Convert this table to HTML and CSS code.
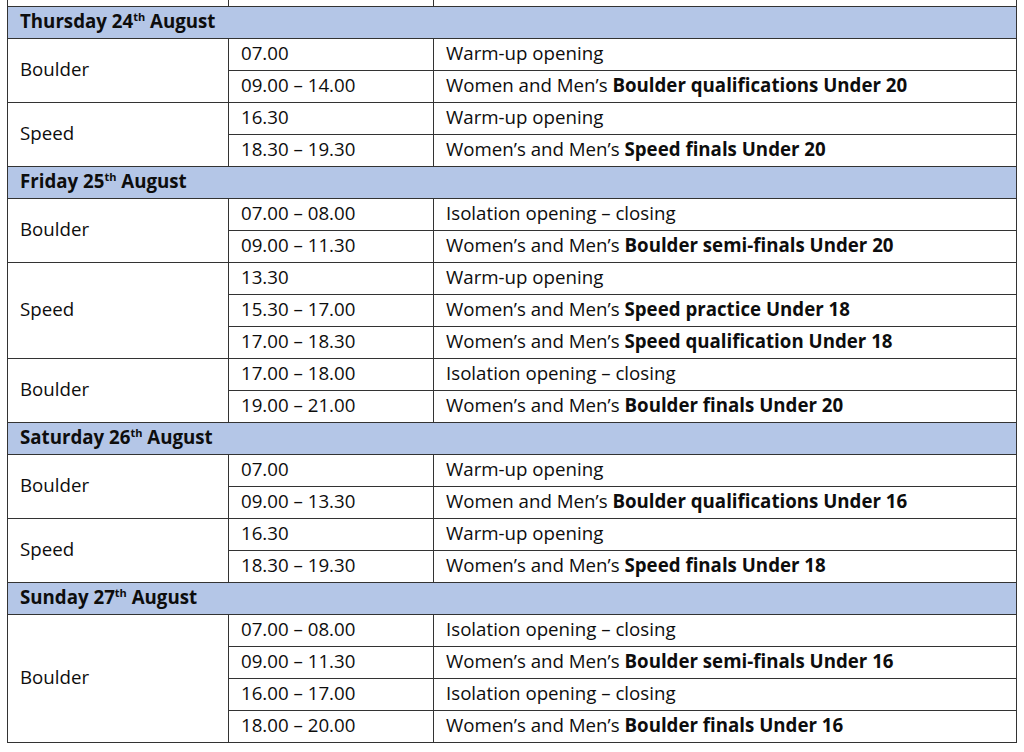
FILE: index.html
```html
<!DOCTYPE html>
<html>
<head>
<meta charset="utf-8">
<link rel="stylesheet" href="styles.css">
</head>
<body>
<table class="schedule">
  <colgroup>
    <col class="c-disc">
    <col class="c-time">
    <col class="c-event">
  </colgroup>
  <tr class="tail"><td></td><td></td><td></td></tr>

  <tr class="day"><td colspan="3">Thursday 24<sup>th</sup> August</td></tr>
  <tr><td rowspan="2">Boulder</td><td>07.00</td><td>Warm-up opening</td></tr>
  <tr><td>09.00 – 14.00</td><td>Women and Men’s <b>Boulder qualifications Under 20</b></td></tr>
  <tr><td rowspan="2">Speed</td><td>16.30</td><td>Warm-up opening</td></tr>
  <tr><td>18.30 – 19.30</td><td>Women’s and Men’s <b>Speed finals Under 20</b></td></tr>

  <tr class="day"><td colspan="3">Friday 25<sup>th</sup> August</td></tr>
  <tr><td rowspan="2">Boulder</td><td>07.00 – 08.00</td><td>Isolation opening – closing</td></tr>
  <tr><td>09.00 – 11.30</td><td>Women’s and Men’s <b>Boulder semi-finals Under 20</b></td></tr>
  <tr><td rowspan="3">Speed</td><td>13.30</td><td>Warm-up opening</td></tr>
  <tr><td>15.30 – 17.00</td><td>Women’s and Men’s <b>Speed practice Under 18</b></td></tr>
  <tr><td>17.00 – 18.30</td><td>Women’s and Men’s <b>Speed qualification Under 18</b></td></tr>
  <tr><td rowspan="2">Boulder</td><td>17.00 – 18.00</td><td>Isolation opening – closing</td></tr>
  <tr><td>19.00 – 21.00</td><td>Women’s and Men’s <b>Boulder finals Under 20</b></td></tr>

  <tr class="day"><td colspan="3">Saturday 26<sup>th</sup> August</td></tr>
  <tr><td rowspan="2">Boulder</td><td>07.00</td><td>Warm-up opening</td></tr>
  <tr><td>09.00 – 13.30</td><td>Women and Men’s <b>Boulder qualifications Under 16</b></td></tr>
  <tr><td rowspan="2">Speed</td><td>16.30</td><td>Warm-up opening</td></tr>
  <tr><td>18.30 – 19.30</td><td>Women’s and Men’s <b>Speed finals Under 18</b></td></tr>

  <tr class="day"><td colspan="3">Sunday 27<sup>th</sup> August</td></tr>
  <tr><td rowspan="4">Boulder</td><td>07.00 – 08.00</td><td>Isolation opening – closing</td></tr>
  <tr><td>09.00 – 11.30</td><td>Women’s and Men’s <b>Boulder semi-finals Under 16</b></td></tr>
  <tr><td>16.00 – 17.00</td><td>Isolation opening – closing</td></tr>
  <tr><td>18.00 – 20.00</td><td>Women’s and Men’s <b>Boulder finals Under 16</b></td></tr>
</table>
</body>
</html>
```

FILE: styles.css
```css
html, body {
  margin: 0;
  padding: 0;
  background: #ffffff;
}

body {
  padding-left: 7px;
  font-family: "Open Sans", "Liberation Sans", sans-serif;
  font-size: 18.7px;
  color: #0d0d0d;
}

.schedule {
  border-collapse: collapse;
  width: 1009px;
  table-layout: fixed;
}

.c-disc { width: 221px; }
.c-time { width: 205px; }
.c-event { width: 583px; }

.schedule td {
  border: 1px solid #333333;
  height: 32px;
  padding: 0 12px 3px 12px;
  line-height: 24px;
  vertical-align: middle;
  white-space: nowrap;
  box-sizing: border-box;
}

.schedule b {
  font-weight: 700;
}

.schedule .tail td {
  border-top: none;
  height: 6px;
  padding: 0;
  line-height: 0;
}

.schedule .day td {
  background: #b4c6e7;
  font-weight: 700;
}

.schedule sup {
  font-size: 11px;
  line-height: 0;
  vertical-align: 7px;
}
```
